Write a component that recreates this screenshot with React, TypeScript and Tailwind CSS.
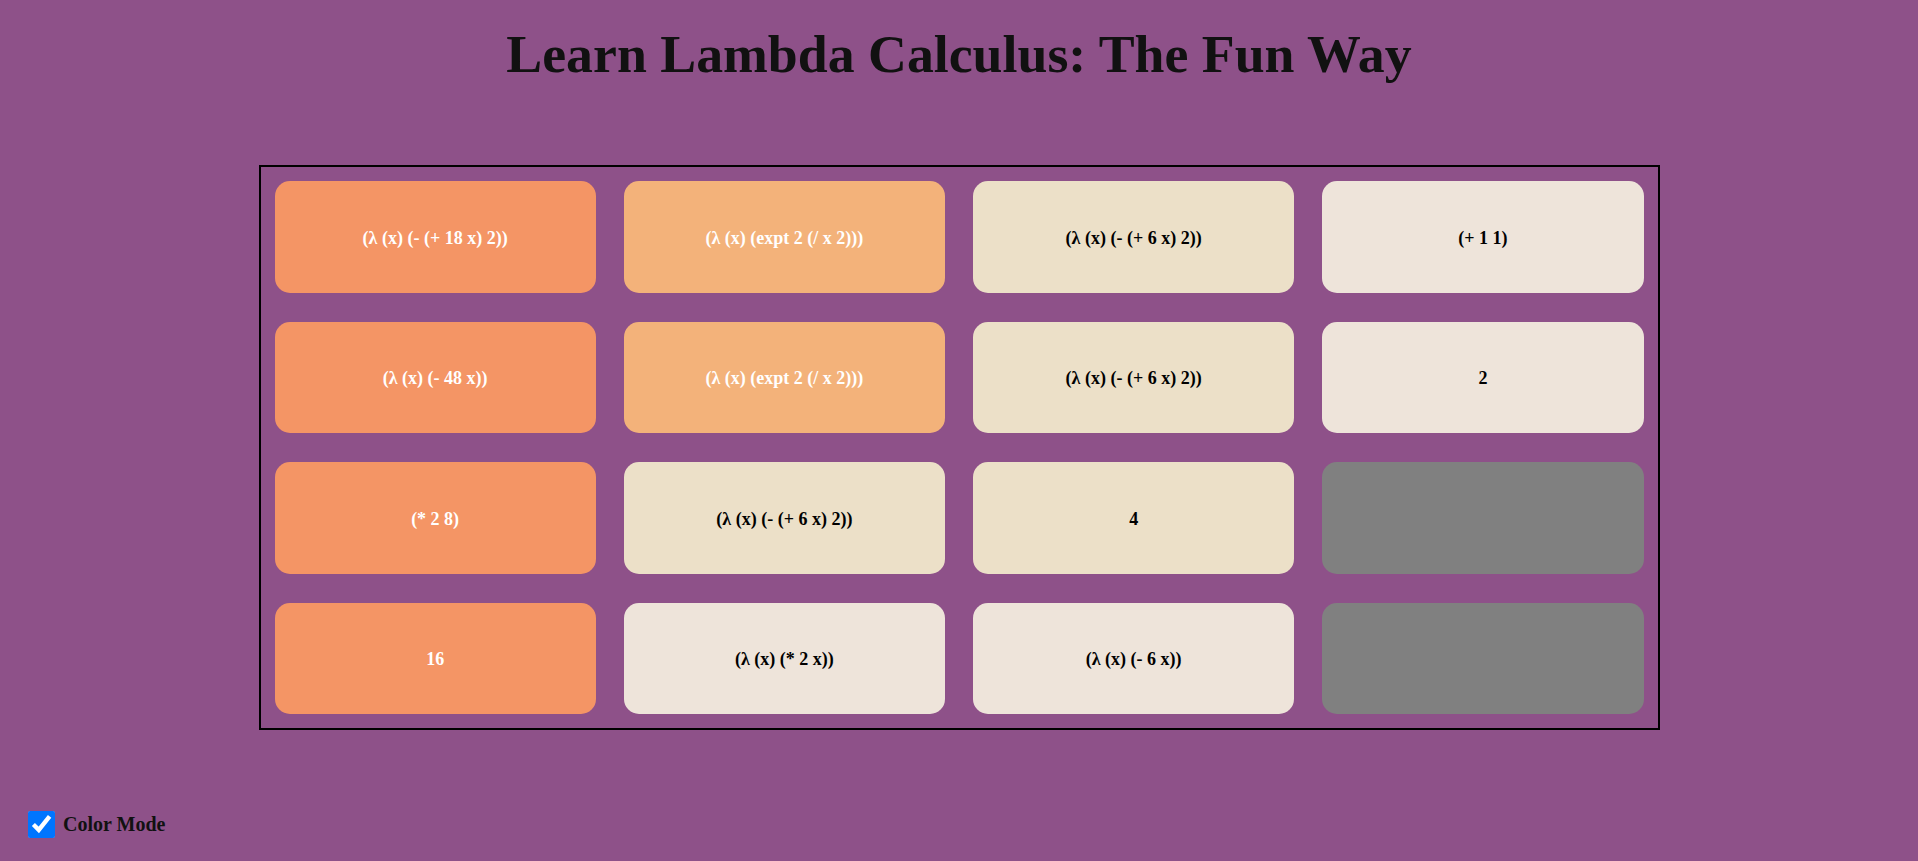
import React from "react";

type Card = { text: string; kind: "o" | "lo" | "b" | "lb" | "g" };

const cards: Card[] = [
  { text: "(λ (x) (- (+ 18 x) 2))", kind: "o" },
  { text: "(λ (x) (expt 2 (/ x 2)))", kind: "lo" },
  { text: "(λ (x) (- (+ 6 x) 2))", kind: "b" },
  { text: "(+ 1 1)", kind: "lb" },
  { text: "(λ (x) (- 48 x))", kind: "o" },
  { text: "(λ (x) (expt 2 (/ x 2)))", kind: "lo" },
  { text: "(λ (x) (- (+ 6 x) 2))", kind: "b" },
  { text: "2", kind: "lb" },
  { text: "(* 2 8)", kind: "o" },
  { text: "(λ (x) (- (+ 6 x) 2))", kind: "b" },
  { text: "4", kind: "b" },
  { text: "", kind: "g" },
  { text: "16", kind: "o" },
  { text: "(λ (x) (* 2 x))", kind: "lb" },
  { text: "(λ (x) (- 6 x))", kind: "lb" },
  { text: "", kind: "g" },
];

function cardClass(kind: Card["kind"]): string {
  switch (kind) {
    case "o":
      return "bg-[#f49565] text-white";
    case "lo":
      return "bg-[#f3b27a] text-white";
    case "b":
      return "bg-[#ece0c8] text-black";
    case "lb":
      return "bg-[#eee4da] text-black";
    default:
      return "bg-[#808080] text-black";
  }
}

export default function App() {
  return (
    <div
      className="min-h-[861px] w-full bg-[#8e5189] overflow-hidden"
      style={{ fontFamily: '"Liberation Serif", "Times New Roman", serif' }}
    >
      <h1 className="pt-[25px] text-center text-[53.8px] leading-[59px] font-bold text-[#111]">
        Learn Lambda Calculus: The Fun Way
      </h1>
      <div className="mx-auto mt-[81px] w-[1401px] border-2 border-black grid grid-cols-4 gap-x-[28px] gap-y-[28.75px] p-[14px]">
        {cards.map((c, i) => (
          <div
            key={i}
            className={`h-[111.75px] rounded-[15px] flex items-center justify-center pt-[3px] text-[18px] font-bold ${cardClass(c.kind)}`}
          >
            {c.text}
          </div>
        ))}
      </div>
      <label className="mt-[79px] ml-[28px] flex items-center gap-[8px] text-[20px] font-bold text-[#111]">
        <input type="checkbox" defaultChecked className="w-[27px] h-[27px] m-0" />
        <span>Color Mode</span>
      </label>
    </div>
  );
}
